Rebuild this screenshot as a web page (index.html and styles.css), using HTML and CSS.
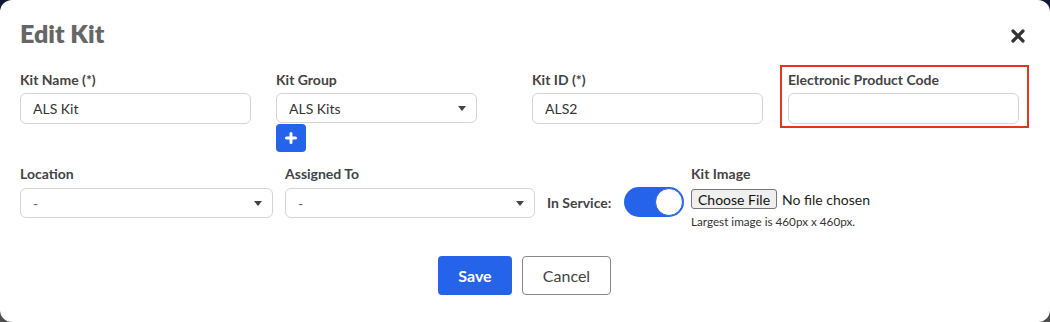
FILE: index.html
```html
<!DOCTYPE html>
<html lang="en">

<head>
    <meta charset="UTF-8" />
    <meta name="viewport" content="width=device-width, initial-scale=1.0" />
    <title>Edit Kit</title>
    <link rel="stylesheet" href="styles.css">
</head>

<body>
    <div class="modal">
        <!-- header -->
        <div class="modal-header">
            <h2 class="modal-title">Edit Kit</h2>
            <button class="close-btn" aria-label="Close">
                <svg width="14" height="14" viewBox="0 0 14 14">
                    <path d="M2 2 L12 12 M12 2 L2 12" stroke="#333" stroke-width="3.2" stroke-linecap="round" />
                </svg>
            </button>
        </div>

        <!-- first row -->
        <div class="form-row top-row">
            <div class="field">
                <label class="field-label">Kit Name (*)</label>
                <input class="text-input" type="text" value="ALS Kit">
            </div>
            <div class="field">
                <label class="field-label">Kit Group</label>
                <div class="select-wrap narrow">
                    <select class="select-input">
                        <option>ALS Kits</option>
                    </select>
                </div>
                <button class="add-btn" aria-label="Add group">
                    <svg width="12" height="12" viewBox="0 0 12 12">
                        <path d="M6 1.5 V10.5 M1.5 6 H10.5" stroke="white" stroke-width="3" stroke-linecap="round" />
                    </svg>
                </button>
            </div>
            <div class="field">
                <label class="field-label">Kit ID (*)</label>
                <input class="text-input" type="text" value="ALS2">
            </div>
            <div class="field highlighted">
                <label class="field-label">Electronic Product Code</label>
                <input class="text-input" type="text" value="">
            </div>
        </div>

        <!-- second row -->
        <div class="form-row bottom-row">
            <div class="field location-field">
                <label class="field-label low">Location</label>
                <div class="select-wrap">
                    <select class="select-input short">
                        <option>-</option>
                    </select>
                </div>
            </div>
            <div class="field assigned-field">
                <label class="field-label low">Assigned To</label>
                <div class="select-wrap">
                    <select class="select-input short">
                        <option>-</option>
                    </select>
                </div>
            </div>
            <div class="service-group">
                <span class="service-label">In Service:</span>
                <div class="toggle on"><span class="toggle-knob"></span></div>
            </div>
            <div class="field image-field">
                <label class="field-label low">Kit Image</label>
                <input class="file-input" type="file">
                <div class="help-text">Largest image is 460px x 460px.</div>
            </div>
        </div>

        <!-- footer buttons -->
        <div class="modal-footer">
            <button class="save-btn">Save</button>
            <button class="cancel-btn">Cancel</button>
        </div>
    </div>
</body>

</html>
```

FILE: styles.css
```css
html,
body {
    height: 100%;
    margin: 0;
    font-family: Lato, "Open Sans", Arial, sans-serif;
    overflow: hidden;
}

body {
    background: linear-gradient(#101a2e, #4d4d4d);
}

.modal {
    background-color: white;
    height: 322px;
    box-sizing: border-box;
    border-radius: 12px;
    padding: 18px 31px 0 20px;
}

.modal-header {
    display: flex;
    align-items: center;
    justify-content: space-between;
}

.modal-title {
    margin: 0;
    font-size: 25px;
    line-height: 30px;
    font-weight: 800;
    color: #666;
}

.close-btn {
    background: transparent;
    border: none;
    padding: 0;
    margin-top: 6px;
    margin-right: -6px;
    width: 14px;
    height: 14px;
    cursor: pointer;
}

.form-row {
    display: flex;
}

.top-row {
    display: grid;
    grid-template-columns: repeat(4, 231px);
    column-gap: 25px;
    align-items: start;
    margin-top: 23px;
}

.field {
    display: flex;
    flex-direction: column;
    position: relative;
}

.field-label {
    font-size: 14px;
    line-height: 17px;
    font-weight: 700;
    color: #444;
    margin-bottom: 5px;
}

.field-label.low {
    margin-bottom: 6px;
}

.text-input {
    height: 31px;
    box-sizing: border-box;
    border: 1px solid #d4d4d4;
    border-radius: 6px;
    padding: 0 12px;
    font-family: inherit;
    font-size: 14px;
    color: #333;
}

/* red outline marking the EPC field */
.highlighted::after {
    content: "";
    position: absolute;
    left: -8px;
    right: -10px;
    top: -6px;
    bottom: -4px;
    border: 2px solid #e8341c;
}

.select-wrap {
    position: relative;
}

.select-wrap.narrow {
    width: 201px;
}

.select-wrap::after {
    content: "";
    position: absolute;
    right: 11px;
    top: 50%;
    margin-top: -2px;
    border-left: 4px solid transparent;
    border-right: 4px solid transparent;
    border-top: 5px solid #444;
    pointer-events: none;
}

.select-input {
    appearance: none;
    -webkit-appearance: none;
    width: 100%;
    height: 30px;
    box-sizing: border-box;
    border: 1px solid #d4d4d4;
    border-radius: 6px;
    background-color: white;
    padding: 0 12px;
    font-family: inherit;
    font-size: 14px;
    color: #333;
}

.select-input.short {
    color: #666;
}

.add-btn {
    width: 30px;
    height: 28px;
    margin-top: 1px;
    border: none;
    border-radius: 4px;
    background-color: #2563eb;
    display: flex;
    align-items: center;
    justify-content: center;
    padding: 0;
    cursor: pointer;
}

.bottom-row {
    margin-top: 13px;
    align-items: flex-start;
}

.location-field {
    width: 253px;
}

.assigned-field {
    width: 250px;
    margin-left: 12px;
}

.service-group {
    display: flex;
    align-items: center;
    margin-top: 22px;
    margin-left: 12px;
}

.service-label {
    font-size: 14px;
    font-weight: 700;
    color: #444;
    width: 77px;
}

.toggle {
    width: 60px;
    height: 30px;
    box-sizing: border-box;
    border-radius: 15px;
    background-color: #2563eb;
    display: flex;
    align-items: center;
    justify-content: flex-end;
    padding: 1px;
}

.toggle-knob {
    width: 28px;
    height: 28px;
    box-sizing: border-box;
    border-radius: 50%;
    background-color: white;
    border: 1px solid #2563eb;
}

.image-field {
    margin-left: 7px;
}

.file-input {
    font-family: inherit;
    font-size: 14px;
    color: #222;
    margin-top: 1px;
}

.file-input::file-selector-button {
    font-family: inherit;
    font-size: 14px;
    color: #111;
    background-color: #efefef;
    border: 1px solid #767676;
    border-radius: 3px;
    padding: 0 6px;
    height: 20px;
    margin-right: 5px;
}

.help-text {
    font-size: 11.7px;
    color: #333;
    margin-top: 5px;
}

.modal-footer {
    display: flex;
    justify-content: center;
    gap: 10px;
    margin-top: 28px;
    padding-left: 10px;
}

.save-btn {
    width: 74px;
    height: 39px;
    border: none;
    border-radius: 4px;
    background-color: #2563eb;
    color: white;
    font-family: inherit;
    font-size: 16px;
    font-weight: 700;
    cursor: pointer;
}

.cancel-btn {
    width: 89px;
    height: 39px;
    border: 1px solid #888;
    border-radius: 4px;
    background-color: white;
    color: #444;
    font-family: inherit;
    font-size: 16px;
    cursor: pointer;
}
```
